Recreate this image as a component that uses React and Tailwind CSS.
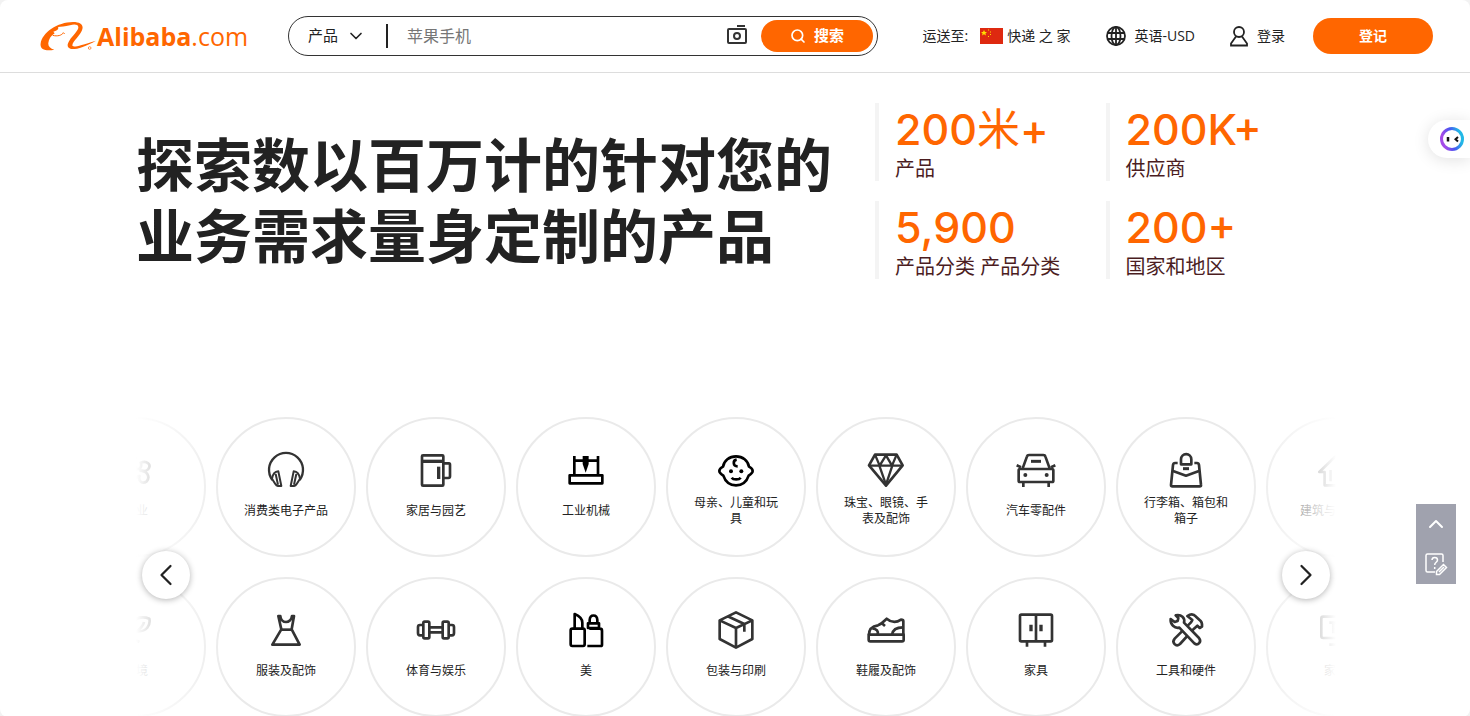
import { ChevronDown, ChevronLeft, ChevronRight, ChevronUp, Search } from "lucide-react";

const icons = {
  agriculture: (
    <>
      <path d="M60 20C50 34 50 46 62 56C72 60 78 50 74 38C92 30 108 44 96 58C88 66 76 64 70 58" />
      <path d="M70 62C92 60 104 80 92 94C78 104 66 92 70 78C60 84 40 84 34 66" />
    </>
  ),
  headphones: (
    <>
      <path d="M19 90A51 51 0 1 1 101 90" strokeWidth="7" />
      <path d="M37 64L46 108H36Q31 107 28 102L18 86C20 74 27 65 37 64ZM29 72L36 104" strokeWidth="6" />
      <path d="M83 64L74 108H84Q89 107 92 102L102 86C100 74 93 65 83 64ZM91 72L84 104" strokeWidth="6" />
    </>
  ),
  mug: (
    <>
      <rect x="18" y="16" width="64" height="91" rx="3" />
      <path d="M18 34H82" strokeWidth="10" />
      <path d="M82 40H99Q102 40 102 44V79Q102 84 97 84H82" />
      <path d="M68 50V87" strokeWidth="10" />
    </>
  ),
  machine: (
    <>
      <rect x="11" y="76" width="98" height="24" />
      <path d="M25 18V76M96 18V76M25 32H96" />
      <path d="M50 18H68V42L59 68L50 42Z" fill="currentColor" stroke="none" />
    </>
  ),
  baby: (
    <>
      <path d="M60 19C80 19 96 32 99 50C103 52 110 58 110 63C110 68 104 73 98 77C92 95 78 106 60 106C42 106 28 95 22 77C16 73 10 68 10 63C10 58 17 52 21 50C24 32 40 19 60 19Z" />
      <path d="M62 29C50 31 50 49 65 49" />
      <circle cx="45" cy="64" r="6" fill="currentColor" stroke="none" />
      <circle cx="76" cy="64" r="6" fill="currentColor" stroke="none" />
      <path d="M47 83C52 90 69 90 74 83" />
    </>
  ),
  diamond: (
    <>
      <path d="M27 14H92L110 46L60 107L9 46Z" />
      <path d="M9 47H110M27 14L41 47L60 16L78 47L92 14M40 47L60 104L79 47" strokeWidth="7" />
    </>
  ),
  car: (
    <>
      <rect x="8" y="57" width="104" height="39" rx="4" />
      <path d="M20 55L33 19Q34 15 39 15H82Q87 15 88 19L101 55M2 46L15 52M118 46L105 52M22 96V111M98 96V111" />
      <path d="M45 34H75" strokeWidth="9" />
      <circle cx="28" cy="75" r="6" fill="currentColor" stroke="none" />
      <circle cx="92" cy="75" r="6" fill="currentColor" stroke="none" />
    </>
  ),
  bag: (
    <>
      <path d="M35 39H27Q22 39 21 45L15 105Q15 109 19 109H101Q106 109 105 105L99 45Q98 39 93 39H85" />
      <path d="M45 43V28A15 15 0 0 1 76 28V43Z" />
      <path d="M19 62L60 77L101 62" />
      <path d="M51 56H69" strokeWidth="9" />
    </>
  ),
  house: (
    <>
      <path d="M10 66L60 18L110 66H94V106H26V66Z" />
      <path d="M44 60V94M60 54H76M60 72H76M60 92H76" />
    </>
  ),
  environment: (
    <>
      <path d="M20 70C40 30 70 14 100 26C104 46 92 66 62 64C76 54 82 44 84 36" />
      <path d="M30 88C44 84 56 88 70 96" />
    </>
  ),
  dress: (
    <>
      <path d="M37 18H43C45 42 75 42 78 18H84L77 58L101 104H19L46 58Z" />
      <path d="M45 59H77" />
    </>
  ),
  dumbbell: (
    <>
      <rect x="22" y="35" width="18" height="50" rx="4" />
      <rect x="80" y="35" width="18" height="50" rx="4" />
      <path d="M22 45H12Q6 45 6 51V69Q6 76 12 76H22M98 45H108Q114 45 114 51V69Q114 76 108 76H98M40 52H80M40 67H80" />
    </>
  ),
  lipstick: (
    <>
      <rect x="14" y="56" width="42" height="52" rx="5" />
      <path d="M26 55V12C40 18 49 26 49 38V55" />
      <path d="M66 40H99V54H66ZM71 40V30C72 12 93 12 94 30V40M64 108H104Q108 108 108 104V62Q108 56 101 56H70" />
    </>
  ),
  box: (
    <path d="M60 7L109 31V87L60 113L11 87V31ZM11 31L60 54L109 31M60 54V113M35 19L85 42V65" />
  ),
  shoe: (
    <>
      <path d="M8 74H113V89Q113 94 108 94H13Q8 94 8 89Z" />
      <path d="M9 74C9 56 18 49 36 46C48 42 55 32 62 26C76 38 92 38 105 29Q112 29 112 33V74" />
      <path d="M19 55Q39 58 35 74M47 39L57 48M78 74C80 60 92 52 111 52" />
    </>
  ),
  wardrobe: (
    <>
      <rect x="12" y="14" width="96" height="80" rx="4" />
      <path d="M60 14V94M33 94V110M87 94V110" />
      <path d="M45 44V64M75 44V64" strokeWidth="10" />
    </>
  ),
  tools: (
    <>
      <path d="M64 18C76 10 84 13 90 20L104 33Q109 38 108 50L101 54L94 47L84 56L42 102C30 112 16 98 26 86L75 37L79 30Z" />
      <path
        d="M14 27L26 36L35 33L37 24L29 16C46 12 58 24 54 38L99 84C108 96 96 108 85 100L40 53C26 56 12 44 14 27Z"
        fill="white"
      />
    </>
  ),
  appliance: (
    <>
      <path d="M108 20H22Q16 20 16 26V78Q16 84 22 84H108M40 104H100" />
      <path d="M40 38H64M52 38V70" />
    </>
  ),
};

const categories = [
  [
    { label: "农业", icon: "agriculture" },
    { label: "消费类电子产品", icon: "headphones" },
    { label: "家居与园艺", icon: "mug" },
    { label: "工业机械", icon: "machine", dark: true },
    { label: "母亲、儿童和玩具", icon: "baby", dark: true },
    { label: "珠宝、眼镜、手表及配饰", icon: "diamond" },
    { label: "汽车零配件", icon: "car" },
    { label: "行李箱、箱包和箱子", icon: "bag" },
    { label: "建筑与房地产", icon: "house" },
  ],
  [
    { label: "环境", icon: "environment" },
    { label: "服装及配饰", icon: "dress" },
    { label: "体育与娱乐", icon: "dumbbell" },
    { label: "美", icon: "lipstick", dark: true },
    { label: "包装与印刷", icon: "box" },
    { label: "鞋履及配饰", icon: "shoe" },
    { label: "家具", icon: "wardrobe" },
    { label: "工具和硬件", icon: "tools" },
    { label: "家电", icon: "appliance" },
  ],
];

const stats = [
  { value: "200", unit: "米", suffix: "+", label: "产品" },
  { value: "200K", suffix: "+", label: "供应商" },
  { value: "5,900", label: "产品分类 产品分类" },
  { value: "200", suffix: "+", label: "国家和地区" },
];

function Logo() {
  return (
    <a href="#" className="flex shrink-0 items-center text-[#ff6600]" aria-label="Alibaba.com">
      <svg className="h-[30px] w-[57px]" viewBox="120 62 171 90" fill="currentColor">
        <path d="M163 148C136 153 119 147 122 129C126 98 172 65 219 65C243 65 252 75 246 90C240 106 219 122 217 135C217 142 236 138 288 121C257 139 228 148 213 146C200 143 201 132 208 121C219 104 236 91 235 80C234 72 222 71 210 75C194 79 184 80 174 80C178 86 170 92 160 94L164 99C153 106 146 117 145 128C144 138 150 144 163 148Z" />
        <path d="M158 105C172 109 186 105 190 97L194 101" fill="none" stroke="currentColor" strokeWidth="3" />
        <circle cx="269" cy="143" r="4" fill="none" stroke="currentColor" strokeWidth="2" />
      </svg>
      <span className="font-['Open_Sans',sans-serif] text-[25px] leading-8">
        <span className="font-bold">Alibaba</span>.com
      </span>
    </a>
  );
}

function SearchBar() {
  return (
    <form
      className="ml-10 flex h-10 max-w-[590px] flex-1 items-center rounded-full border border-[#333] pr-1 pl-[19px]"
      onSubmit={(e) => e.preventDefault()}
    >
      <button type="button" className="flex items-center gap-2 text-[15px] text-[#222]">
        产品
        <ChevronDown className="h-5 w-5" />
      </button>
      <span className="ml-5 h-6 w-0.5 bg-[#222]" />
      <input
        type="text"
        aria-label="搜索产品"
        placeholder="苹果手机"
        className="ml-[19px] min-w-0 flex-1 text-base outline-none placeholder:text-[#767676]"
      />
      <button type="button" aria-label="图片搜索" className="mr-3 text-[#333]">
        <svg className="h-6 w-6" viewBox="0 0 24 24" fill="none" stroke="currentColor" strokeWidth="2">
          <rect x="3" y="5" width="18" height="14" rx="1" />
          <circle cx="12" cy="12" r="3" />
          <path d="M12 2H20" />
        </svg>
      </button>
      <button
        type="submit"
        className="flex h-8 w-28 items-center justify-center gap-2 rounded-full bg-[#ff6600] text-[15px] font-bold text-white"
      >
        <Search className="h-4 w-4" strokeWidth={2.5} />
        搜索
      </button>
    </form>
  );
}

function Flag() {
  return (
    <svg className="h-4 w-[23px]" viewBox="0 0 23 16">
      <rect width="23" height="16" fill="#de2910" />
      <path d="M4 2L5 4H7L5.400 5.400L6 7.500L4 6.200L2 7.500L2.600 5.400L1 4H3Z" fill="#ffde00" />
      <path d="M8 1.500h1v1h-1zM10 3.500h1v1h-1zM10 6h1v1h-1zM8 8h1v1h-1z" fill="#ffde00" />
    </svg>
  );
}

function Header() {
  return (
    <header className="flex h-[73px] items-center border-b border-[#ddd] pr-[37px] pl-10 text-sm text-[#222]">
      <Logo />
      <SearchBar />
      <nav className="ml-auto flex shrink-0 items-center">
        <a href="#" className="flex items-center gap-1">
          <span className="mr-2">运送至:</span>
          <Flag />
          快递 之 家
        </a>
        <a href="#" className="ml-9 flex items-center gap-2">
          <svg className="h-5 w-5" viewBox="0 0 20 20" fill="none" stroke="currentColor" strokeWidth="1.800">
            <circle cx="10" cy="10" r="9" />
            <ellipse cx="10" cy="10" rx="4.500" ry="9" />
            <path d="M10 1V19M1.500 7H18.500M1.500 13H18.500" />
          </svg>
          英语-USD
        </a>
        <a href="#" className="ml-8 flex items-center gap-1.5">
          <svg className="h-6 w-6" viewBox="0 0 24 24" fill="none" stroke="currentColor" strokeWidth="1.800">
            <circle cx="12" cy="8" r="5" />
            <path d="M9 12.500L4 19.500V21.500H20V19.500L15 12.500" />
          </svg>
          登录
        </a>
        <button className="ml-7 h-9 w-[120px] rounded-full bg-[#ff6600] font-bold text-white">登记</button>
      </nav>
    </header>
  );
}

function Hero() {
  return (
    <section className="grid grid-cols-[739fr_461fr] pt-[30px]">
      <h1 className="pt-[26px] text-[58px] leading-[71px] font-bold text-[#222]">
        探索数以百万计的针对您的业务需求量身定制的产品
      </h1>
      <div className="grid grid-cols-2 gap-y-5">
        {stats.map((stat) => (
          <div key={stat.label} className="h-[78px] border-l-4 border-[#f4f4f4] pl-4 whitespace-nowrap">
            <div className="font-['Inter','Noto_Sans_CJK_SC',sans-serif] text-[43px] leading-[52px] font-medium text-[#ff6600]">
              {stat.value}
              {stat.unit && <span className="font-normal">{stat.unit}</span>}
              {stat.suffix}
            </div>
            <div className="text-xl leading-7 text-[#4b1d1f]">{stat.label}</div>
          </div>
        ))}
      </div>
    </section>
  );
}

function Category({ label, icon, dark }) {
  return (
    <a
      href="#"
      className="flex h-[140px] w-[140px] shrink-0 flex-col items-center rounded-full border-2 border-[#eaeaea] pt-[31px]"
    >
      <svg
        className={dark ? "h-10 w-10 text-black" : "h-10 w-10 text-[#333]"}
        viewBox="0 0 120 120"
        fill="none"
        stroke="currentColor"
        strokeWidth="8"
        strokeLinejoin="round"
      >
        {icons[icon]}
      </svg>
      <span className="mt-[5px] flex h-8 w-[88px] items-center justify-center text-center text-xs leading-4 text-[#222]">
        {label}
      </span>
    </a>
  );
}

function Carousel() {
  return (
    <section className="relative mt-[138px]">
      <div className="relative flex flex-col gap-5 overflow-hidden">
        {categories.map((row, i) => (
          <div key={i} className="flex justify-center gap-2.5">
            {row.map((category) => (
              <Category key={category.label} {...category} />
            ))}
          </div>
        ))}
        <div className="pointer-events-none absolute inset-y-0 left-0 w-24 bg-linear-to-r from-white to-transparent" />
        <div className="pointer-events-none absolute inset-y-0 right-0 w-24 bg-linear-to-l from-white to-transparent" />
      </div>
      <button
        aria-label="上一页"
        className="absolute top-[134px] left-1.5 flex h-12 w-12 items-center justify-center rounded-full bg-white text-[#222] shadow-[0_1px_6px_rgba(0,0,0,0.3)]"
      >
        <ChevronLeft className="h-9 w-9" strokeWidth={1.5} />
      </button>
      <button
        aria-label="下一页"
        className="absolute top-[134px] right-1.5 flex h-12 w-12 items-center justify-center rounded-full bg-white text-[#222] shadow-[0_1px_6px_rgba(0,0,0,0.3)]"
      >
        <ChevronRight className="h-9 w-9" strokeWidth={1.5} />
      </button>
    </section>
  );
}

function FloatingTools() {
  return (
    <>
      <button
        aria-label="助手"
        className="fixed top-[120px] right-0 flex h-[38px] w-[42px] items-center rounded-l-full bg-white pl-3 shadow-[0_2px_16px_rgba(0,0,0,0.12)]"
      >
        <svg className="h-6 w-6" viewBox="0 0 24 24" fill="none">
          <defs>
            <linearGradient id="ring" x1="0.2" y1="1" x2="1" y2="0.8">
              <stop offset="0" stopColor="#a44be8" />
              <stop offset="0.5" stopColor="#4a55f0" />
              <stop offset="1" stopColor="#22b8e6" />
            </linearGradient>
          </defs>
          <circle cx="12" cy="12" r="10.500" stroke="url(#ring)" strokeWidth="3" />
          <path d="M8 10V14.500" stroke="#111" strokeWidth="2.500" />
          <path d="M18 10L15.500 12.300L18 14.500" stroke="#111" strokeWidth="2" />
        </svg>
      </button>
      <div className="fixed top-[504px] right-3.5 flex w-10 flex-col bg-[#a0a2ae] text-white">
        <button aria-label="返回顶部" className="flex h-10 items-center justify-center">
          <ChevronUp className="h-6 w-6" />
        </button>
        <button aria-label="反馈" className="flex h-10 items-center justify-center">
          <svg className="h-6 w-6" viewBox="0 0 24 24" fill="none" stroke="currentColor" strokeWidth="1.500">
            <path d="M19 10V3.500Q19 2 17.500 2H3.500Q2 2 2 3.500V18.500Q2 20 3.500 20H11" />
            <path d="M8 8C8 4.500 13.500 4.500 13.500 8C13.500 10.500 10.700 10 10.700 13M10.700 15V17" />
            <path d="M12.500 19.500L19.500 12.500L22.500 15.500L15.500 22.500H12.500ZM15 20L20 15" />
          </svg>
        </button>
      </div>
    </>
  );
}

export default function App() {
  return (
    <div className="min-h-screen bg-[#f2f2f2] font-['Open_Sans','Noto_Sans_CJK_SC',sans-serif]">
      <div className="min-h-screen overflow-hidden rounded-lg bg-white">
        <Header />
        <main className="pl-0.5">
          <div className="mx-auto max-w-[1200px]">
            <Hero />
            <Carousel />
          </div>
        </main>
      </div>
      <FloatingTools />
    </div>
  );
}
